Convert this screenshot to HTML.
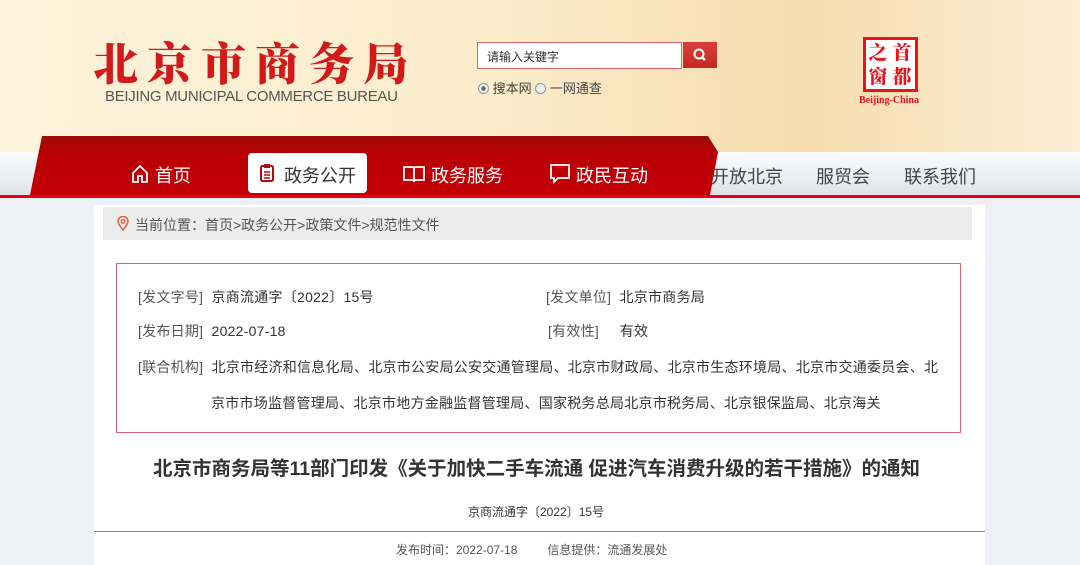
<!DOCTYPE html>
<html><head><meta charset="utf-8"><style>
*{margin:0;padding:0;box-sizing:border-box}
body{width:1080px;height:561px;overflow:hidden;background:#eef0f5;font-family:"Liberation Sans","Noto Sans CJK SC",sans-serif;position:relative}
.a{position:absolute;white-space:nowrap}
.hdr{position:absolute;left:0;top:0;width:1080px;height:152px;background:linear-gradient(90deg,#fdf3dc 0%,#fbeccb 45%,#f6dcaf 75%,#fbeed5 100%)}
.gray{position:absolute;left:0;top:152px;width:1080px;height:43px;background:linear-gradient(#fbfcfd,#dfe3e9)}
.redl{position:absolute;left:0;top:195px;width:1080px;height:3px;background:#e60012}
.nav{position:absolute;left:30px;top:136px;width:688px;height:59px;background:linear-gradient(#9c0c05,#b90005 30%,#c30006);clip-path:polygon(12px 0,678px 0,688px 16px,680px 59px,0 59px)}
.ni{color:#fff;font-size:18px;top:162px}
.gi{color:#444;font-size:18px;top:163px}
.panel{position:absolute;left:94px;top:205px;width:891px;height:360px;background:#fff}
.f{font-size:14px;color:#333;letter-spacing:0.25px}
.l{color:#555}
</style></head><body>
<div class="hdr"></div>
<div class="a" style="left:93px;top:28px;font-family:'Noto Serif CJK SC',serif;font-weight:900;font-size:45px;color:#d21a1a;letter-spacing:9px">北京市商务局</div>
<div class="a" style="left:105px;top:88px;font-size:15px;color:#555;letter-spacing:-0.3px">BEIJING MUNICIPAL COMMERCE BUREAU</div>
<div class="a" style="left:477px;top:42px;width:205px;height:27px;border:1px solid #d8646e;background:#fff;font-size:12px;color:#333;padding:5px 0 0 9px">请输入关键字</div>
<div class="a" style="left:683px;top:42px;width:34px;height:26px;background:linear-gradient(#d8403a,#c52a22)"><svg width="34" height="26"><circle cx="16" cy="12" r="4.5" fill="none" stroke="#fff" stroke-width="2"/><line x1="19" y1="15" x2="22" y2="18" stroke="#fff" stroke-width="2.5"/></svg></div>
<div class="a" style="left:478px;top:78px;font-size:13px;color:#444"><span style="display:inline-block;width:11px;height:11px;border:1px solid #999;border-radius:50%;background:radial-gradient(#666 30%,#eee 40%);vertical-align:-1px"></span> 搜本网 <span style="display:inline-block;width:11px;height:11px;border:1px solid #999;border-radius:50%;background:#eee;vertical-align:-1px"></span> 一网通查</div>
<div class="a" style="left:863px;top:37px;width:55px;height:55px;border:3px solid #e8141b;background:#fff;font-family:'Noto Serif CJK SC',serif;font-weight:900;color:#e8141b;font-size:19px;line-height:24px;text-align:center"><div style="display:flex"><span style="width:24px">之</span><span style="width:24px">首</span></div><div style="display:flex"><span style="width:24px">窗</span><span style="width:24px">都</span></div></div>
<div class="a" style="left:859px;top:95px;font-family:'Liberation Serif',serif;font-weight:bold;font-size:10px;color:#e8141b">Beijing-China</div>
<div class="gray"></div>
<div class="nav"></div>
<div class="redl"></div>
<svg class="a" style="left:131px;top:164px" width="18" height="20"><path d="M2 9 L9 2 L16 9 V18 H11 V12 H7 V18 H2 Z" fill="none" stroke="#fff" stroke-width="1.8"/></svg>
<div class="a ni" style="left:155px">首页</div>
<div class="a" style="left:248px;top:153px;width:119px;height:40px;background:#fff;border-radius:4px"></div>
<svg class="a" style="left:259px;top:163px" width="16" height="20"><rect x="2" y="3" width="12" height="15" rx="1.5" fill="none" stroke="#b40a10" stroke-width="2"/><rect x="5" y="1" width="6" height="4" fill="#b40a10"/><path d="M5 9h6M5 12h6M5 15h6" stroke="#b40a10" stroke-width="1.6"/></svg>
<div class="a" style="left:284px;top:162px;font-size:18px;color:#333">政务公开</div>
<svg class="a" style="left:402px;top:164px" width="24" height="20"><path d="M2 3 H10 Q12 3 12 5 V18 Q12 16 10 16 H2 Z M22 3 H14 Q12 3 12 5 V18 Q12 16 14 16 H22 Z" fill="none" stroke="#fff" stroke-width="1.8"/></svg>
<div class="a ni" style="left:431px">政务服务</div>
<svg class="a" style="left:549px;top:163px" width="22" height="22"><path d="M2 2 H20 V15 H9 L5 19 V15 H2 Z" fill="none" stroke="#fff" stroke-width="1.8"/></svg>
<div class="a ni" style="left:576px">政民互动</div>
<div class="a gi" style="left:711px">开放北京</div>
<div class="a gi" style="left:816px">服贸会</div>
<div class="a gi" style="left:904px">联系我们</div>
<div class="panel"></div>
<div class="a" style="left:103px;top:207px;width:869px;height:33px;background:#ececec"></div>
<svg class="a" style="left:117px;top:216px" width="12" height="15"><path d="M6 14 C2 9 1 7 1 5.5 A5 5 0 0 1 11 5.5 C11 7 10 9 6 14Z" fill="none" stroke="#e0603a" stroke-width="1.5"/><circle cx="6" cy="5.5" r="1.8" fill="none" stroke="#e0603a" stroke-width="1.3"/></svg>
<div class="a" style="left:135px;top:215px;font-size:14px;color:#555">当前位置：首页&gt;政务公开&gt;政策文件&gt;规范性文件</div>
<div class="a" style="left:116px;top:263px;width:845px;height:170px;border:1px solid #d8646e"></div>
<div class="a f" style="left:138px;top:287px"><span class="l">[发文字号]</span>&nbsp; 京商流通字〔2022〕15号</div>
<div class="a f" style="left:546px;top:287px"><span class="l">[发文单位]</span>&nbsp; 北京市商务局</div>
<div class="a f" style="left:138px;top:321px"><span class="l">[发布日期]</span>&nbsp; 2022-07-18</div>
<div class="a f" style="left:548px;top:321px"><span class="l">[有效性]</span>&nbsp;&nbsp;&nbsp;&nbsp; 有效</div>
<div class="a f" style="left:138px;top:357px"><span class="l">[联合机构]</span>&nbsp; 北京市经济和信息化局、北京市公安局公安交通管理局、北京市财政局、北京市生态环境局、北京市交通委员会、北</div>
<div class="a f" style="left:211px;top:393px">京市市场监督管理局、北京市地方金融监督管理局、国家税务总局北京市税务局、北京银保监局、北京海关</div>
<div class="a" style="left:153px;top:452px;font-size:19.5px;font-weight:bold;color:#333">北京市商务局等11部门印发《关于加快二手车流通 促进汽车消费升级的若干措施》的通知</div>
<div class="a" style="left:468px;top:503px;font-size:12px;color:#333">京商流通字〔2022〕15号</div>
<div class="a" style="left:94px;top:531px;width:891px;height:1px;background:#d8646e"></div>
<div class="a" style="left:396px;top:541px;font-size:12px;color:#555">发布时间：2022-07-18&nbsp;&nbsp;&nbsp;&nbsp;&nbsp;&nbsp;&nbsp;&nbsp;&nbsp;信息提供：流通发展处</div>
</body></html>
